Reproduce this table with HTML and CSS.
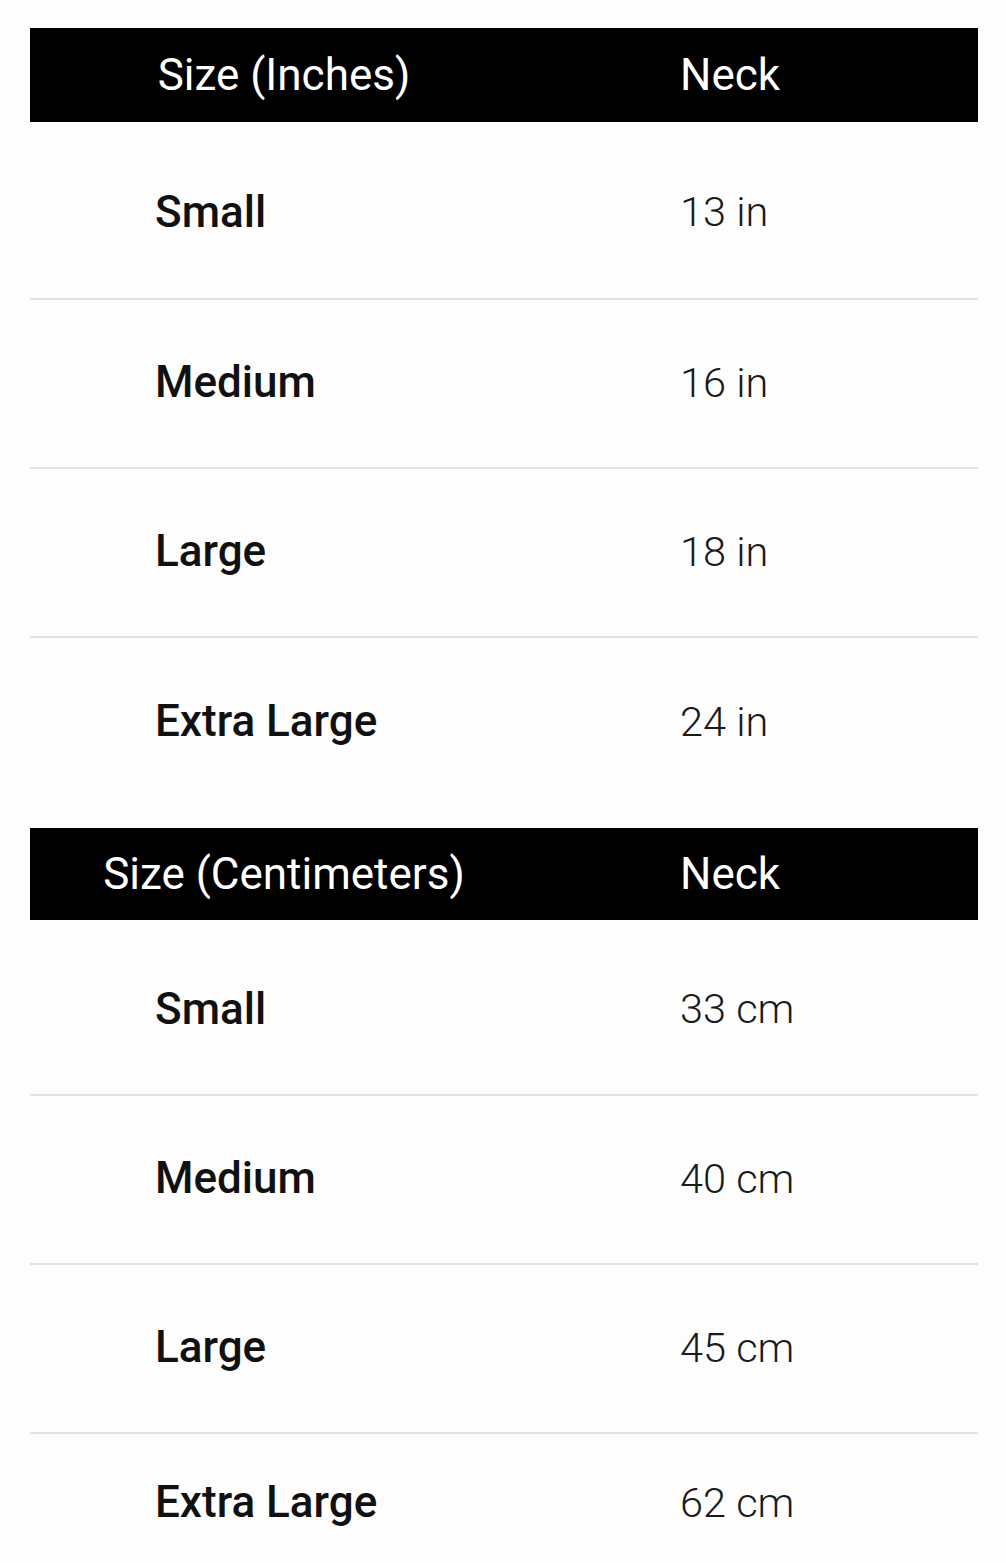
FILE: index.html
```html
<!DOCTYPE html>
<html lang="en">
<head>
  <meta charset="UTF-8">
  <meta name="viewport" content="width=device-width, initial-scale=1.0">
  <title>Size Chart</title>
  <link rel="stylesheet" href="styles.css">
</head>
<body>
  <!-- Inches -->
  <div class="chart">
    <div class="chart-head">
      <div class="col-size">Size (Inches)</div>
      <div class="col-neck">Neck</div>
    </div>
    <div class="chart-row first">
      <div class="label">Small</div>
      <div class="value">13 in</div>
    </div>
    <div class="chart-row">
      <div class="label">Medium</div>
      <div class="value">16 in</div>
    </div>
    <div class="chart-row">
      <div class="label">Large</div>
      <div class="value">18 in</div>
    </div>
    <div class="chart-row last">
      <div class="label">Extra Large</div>
      <div class="value">24 in</div>
    </div>
  </div>

  <!-- Centimeters -->
  <div class="chart">
    <div class="chart-head">
      <div class="col-size">Size (Centimeters)</div>
      <div class="col-neck">Neck</div>
    </div>
    <div class="chart-row first">
      <div class="label">Small</div>
      <div class="value">33 cm</div>
    </div>
    <div class="chart-row">
      <div class="label">Medium</div>
      <div class="value">40 cm</div>
    </div>
    <div class="chart-row">
      <div class="label">Large</div>
      <div class="value">45 cm</div>
    </div>
    <div class="chart-row last">
      <div class="label">Extra Large</div>
      <div class="value">62 cm</div>
    </div>
  </div>
</body>
</html>
```

FILE: styles.css
```css
/* General */
body {
  background-color: #fdfdfd;
  color: #111;
  font-family: Roboto, "Liberation Sans", Arial, sans-serif;
  margin: 0;
  padding: 28px 28px 0 30px;
}

.chart {
  width: 948px;
}

.chart + .chart {
  margin-top: 21px;
}

/* Header bar */
.chart-head {
  display: grid;
  grid-template-columns: 508px 1fr;
  align-items: center;
  height: 94px;
  background-color: #000;
  color: #fff;
  font-size: 44px;
  font-weight: 400;
}

.chart + .chart .chart-head {
  height: 92px;
}

.chart-head .col-size {
  text-align: center;
}

.chart-head .col-neck {
  padding-left: 142px;
}

/* Rows */
.chart-row {
  display: grid;
  grid-template-columns: 508px 1fr;
  align-items: center;
  height: 169px;
  padding-bottom: 3px;
  box-sizing: border-box;
  border-bottom: 2px solid #e2e2e2;
}

.chart-row.first {
  height: 178px;
  padding-top: 3px;
  padding-bottom: 0;
}

.chart + .chart .chart-row.first {
  height: 176px;
}

.chart-row.last {
  border-bottom: none;
}

.chart + .chart .chart-row.last {
  height: 136px;
  padding-bottom: 0;
}

.chart-row .label {
  padding-left: 125px;
  font-size: 44px;
  font-weight: 500;
  color: #111;
}

.chart-row .value {
  padding-left: 142px;
  font-size: 41.5px;
  font-weight: 300;
  color: #1a1a1a;
}
```
